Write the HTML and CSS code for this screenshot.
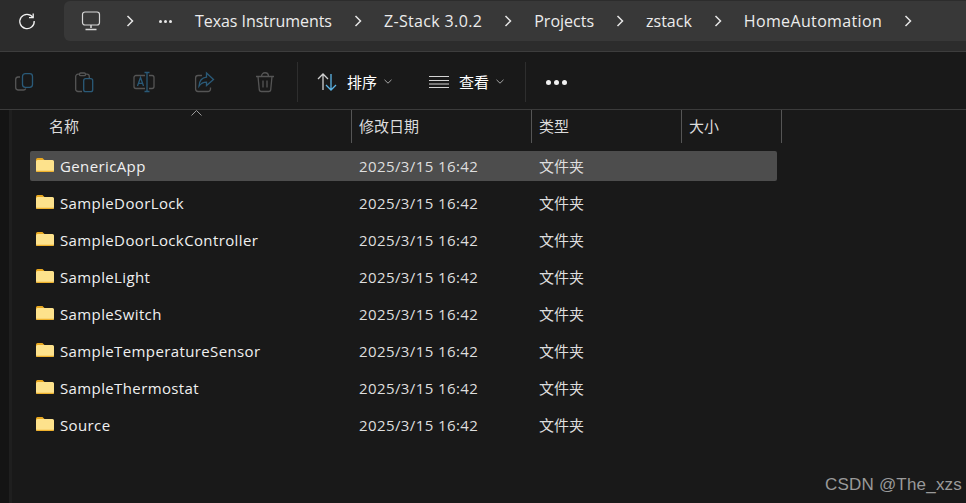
FILE: index.html
```html
<!DOCTYPE html>
<html lang="zh">
<head>
<meta charset="utf-8">
<title>zstack</title>
<link rel="stylesheet" href="styles.css">
</head>
<body>
<svg class="defs" width="0" height="0" aria-hidden="true">
  <symbol id="folder" viewBox="0 0 18 14">
    <path d="M0 1.500A1.500 1.500 0 0 1 1.500 0h5L9 2.500V6H0z" fill="#e9a820"/>
    <path d="M0 3.500A1.500 1.500 0 0 1 1.500 2H16.500A1.500 1.500 0 0 1 18 3.500V12.500A1.500 1.500 0 0 1 16.500 14h-15A1.500 1.500 0 0 1 0 12.500z" fill="#fde28c"/>
    <path d="M0 12.800h18A1.500 1.500 0 0 1 16.500 14h-15A1.500 1.500 0 0 1 0 12.800z" fill="#efb12c"/>
  </symbol>
  <symbol id="chev" viewBox="0 0 10 14">
    <path d="M2.500 2l5 5-5 5" fill="none" stroke="currentColor" stroke-width="1.500"/>
  </symbol>
  <symbol id="down" viewBox="0 0 8 5">
    <path d="M.5.800L4 4.200 7.500.800" fill="none" stroke="currentColor"/>
  </symbol>
</svg>
<div class="addressbar">
  <svg class="refresh" width="20" height="20" viewBox="0 0 20 20" fill="none" stroke="#f2f2f2" stroke-width="1.300"><path d="M15.800 6.200A7.200 7.200 0 1 0 17.200 10"/><path d="M12 6.600h4.200V2.400"/></svg>
  <nav class="crumbs">
    <svg class="pc" width="20" height="20" viewBox="0 0 20 20" fill="none" stroke="#d8d8d8" stroke-width="1.200"><rect x="1.500" y="1" width="17" height="13" rx="2.500"/><path d="M10 14v3M4.500 18.500h11" stroke-width="1.500"/></svg>
    <svg class="chev" width="10" height="14"><use href="#chev"/></svg>
    <span class="more"><i></i><i></i><i></i></span>
    <span class="crumb first">Texas Instruments</span>
    <svg class="chev" width="10" height="14"><use href="#chev"/></svg>
    <span class="crumb wide">Z-Stack 3.0.2</span>
    <svg class="chev" width="10" height="14"><use href="#chev"/></svg>
    <span class="crumb">Projects</span>
    <svg class="chev" width="10" height="14"><use href="#chev"/></svg>
    <span class="crumb">zstack</span>
    <svg class="chev" width="10" height="14"><use href="#chev"/></svg>
    <span class="crumb wide">HomeAutomation</span>
    <svg class="chev" width="10" height="14"><use href="#chev"/></svg>
  </nav>
</div>
<div class="toolbar">
  <div class="tools">
    <svg width="20" height="20" viewBox="0 0 20 20" fill="none" stroke-width="1.300"><path d="M5 5H3A2.500 2.500 0 0 0 .7 7.500v8A2.500 2.500 0 0 0 3 18h5.500a2.500 2.500 0 0 0 2.300-1.500" stroke="#555"/><rect x="7.500" y="1.600" width="10" height="13.800" rx="2.800" stroke="#2a5a78"/></svg>
    <svg width="20" height="20" viewBox="0 0 20 20" fill="none" stroke-width="1.300"><path d="M7 19.500H3a2.300 2.300 0 0 1-2.300-2.300V4.500A2.300 2.300 0 0 1 3 2.200h9a2.300 2.300 0 0 1 2.300 2.300V6" stroke="#555"/><rect x="4.500" y="1" width="6" height="2.600" rx="1.200" fill="#191919" stroke="#555"/><rect x="8.700" y="6.700" width="9" height="13" rx="2" stroke="#2a5a78"/></svg>
    <svg class="nudge" width="20" height="20" viewBox="0 0 20 20" fill="none" stroke-width="1.300"><path d="M11 3.500H2A2 2 0 0 0 0 5.500v9a2 2 0 0 0 2 2h9M15 3.500h3a2 2 0 0 1 2 2v9a2 2 0 0 1-2 2h-3" stroke="#555"/><path d="M13 .500v19M10.500.500h5M10.500 19.500h5M3.500 14l3-8.500L9.500 14M4.500 11.300h4" stroke="#2a5a78"/></svg>
    <svg width="20" height="20" viewBox="0 0 20 20" fill="none" stroke-width="1.300"><path d="M7 3.500H3A2.500 2.500 0 0 0 .6 6v11A2.500 2.500 0 0 0 3 19.500h10a2.500 2.500 0 0 0 2.500-2.500v-1.500" stroke="#555"/><path d="M11.500 1l7 6.500-7 6v-3.300c-3.500 0-5.500 1-7.500 4 .3-5 3-8.500 7.500-9z" stroke="#2a5a78"/></svg>
    <svg width="20" height="20" viewBox="0 0 20 20" fill="none" stroke="#555" stroke-width="1.300"><path d="M1 4.500h18M6.500 4.500c0-5 7-5 7 0M3 4.500l1.300 13.500a2 2 0 0 0 2 1.500h7.400a2 2 0 0 0 2-1.500L17 4.500M8 8.500v7M12 8.500v7"/></svg>
  </div>
  <div class="sep"></div>
  <button class="tbtn sort">
    <svg width="20" height="18" viewBox="0 0 20 18" fill="none" stroke-width="1.300"><path d="M1 6l5-5 5 5M6 1v16" stroke="#cfcfcf"/><path d="M9 12l5 5 5-5M14 17V1" stroke="#5cb4e6"/></svg>
    <span class="tlabel">排序</span>
    <svg class="down" width="8" height="5"><use href="#down"/></svg>
  </button>
  <button class="tbtn view">
    <svg width="20" height="14" viewBox="0 0 20 14" stroke="#d4d4d4" stroke-width="1.200"><path d="M0 1.500h20M0 5.500h20M0 9h20M0 12.500h20"/></svg>
    <span class="tlabel">查看</span>
    <svg class="down" width="8" height="5"><use href="#down"/></svg>
  </button>
  <div class="sep"></div>
  <div class="dots"><i></i><i></i><i></i></div>
</div>
<main class="content">
  <div class="rail"></div>
  <div class="list">
    <div class="head">
      <div class="hc hname">名称<svg class="sortmark" width="11" height="6" viewBox="0 0 11 6" fill="none" stroke="#9a9a9a"><path d="M.5 5.500l5-5 5 5"/></svg></div>
      <div class="hc hdate">修改日期</div>
      <div class="hc htype">类型</div>
      <div class="hc hsize">大小</div>
    </div>
    <div class="row selected"><svg class="fld"><use href="#folder"/></svg><span class="name">GenericApp</span><span class="date">2025/3/15 16:42</span><span class="type">文件夹</span></div>
    <div class="row"><svg class="fld"><use href="#folder"/></svg><span class="name">SampleDoorLock</span><span class="date">2025/3/15 16:42</span><span class="type">文件夹</span></div>
    <div class="row"><svg class="fld"><use href="#folder"/></svg><span class="name">SampleDoorLockController</span><span class="date">2025/3/15 16:42</span><span class="type">文件夹</span></div>
    <div class="row"><svg class="fld"><use href="#folder"/></svg><span class="name">SampleLight</span><span class="date">2025/3/15 16:42</span><span class="type">文件夹</span></div>
    <div class="row"><svg class="fld"><use href="#folder"/></svg><span class="name">SampleSwitch</span><span class="date">2025/3/15 16:42</span><span class="type">文件夹</span></div>
    <div class="row"><svg class="fld"><use href="#folder"/></svg><span class="name">SampleTemperatureSensor</span><span class="date">2025/3/15 16:42</span><span class="type">文件夹</span></div>
    <div class="row"><svg class="fld"><use href="#folder"/></svg><span class="name">SampleThermostat</span><span class="date">2025/3/15 16:42</span><span class="type">文件夹</span></div>
    <div class="row"><svg class="fld"><use href="#folder"/></svg><span class="name">Source</span><span class="date">2025/3/15 16:42</span><span class="type">文件夹</span></div>
  </div>
  <div class="watermark">CSDN @The_xzs</div>
</main>
</body>
</html>
```
FILE: styles.css
```css
* { box-sizing: border-box; }
html, body { margin: 0; height: 100%; overflow: hidden; }
body {
  background: #191919;
  color: #fff;
  font-family: "Open Sans", "Noto Sans CJK SC", sans-serif;
  display: flex;
  flex-direction: column;
  width: 966px;
  height: 503px;
}
.defs { position: absolute; }
.addressbar {
  height: 52px;
  flex: none;
  background: #2c2c2c;
  border-bottom: 1px solid #3d3d3d;
  padding: 1px 0 10px 17px;
  display: flex;
  align-items: center;
  gap: 27px;
}
.refresh { flex: none; }
.crumbs {
  flex: 1;
  height: 40px;
  background: #383838;
  border-radius: 6px 0 0 6px;
  display: flex;
  align-items: center;
  padding-left: 17px;
  color: #ececec;
}
.pc { flex: none; margin-right: 24px; }
.chev { flex: none; color: #e6e6e6; }
.more { display: flex; gap: 2px; width: 36px; margin-left: 24px; }
.more i { width: 3px; height: 3px; border-radius: 50%; background: #e8e8e8; }
.crumb { font-size: 16px; letter-spacing: 0; white-space: nowrap; margin: 0 21px; }
.first { margin-left: 0; letter-spacing: -0.05px; }
.wide { letter-spacing: 0.35px; }
.toolbar {
  height: 58px;
  flex: none;
  border-bottom: 1px solid #3b3b3b;
  display: flex;
  align-items: center;
  padding: 3px 0 0 15px;
}
.tools { display: flex; align-items: center; gap: 40px; width: 282px; }
.tools svg { flex: none; overflow: visible; }
.nudge { margin-left: -1px; margin-right: 1px; }
.sep { width: 1px; height: 40px; background: #2e2e2e; flex: none; }
.tbtn {
  background: none;
  border: 0;
  padding: 0;
  color: #fff;
  font: inherit;
  display: flex;
  align-items: center;
  flex: none;
}
.sort { margin-left: 19px; width: 112px; }
.view { width: 96px; }
.tlabel { font-size: 15px; margin: -2px 0 0 10px; font-family: "Noto Sans CJK SC", sans-serif; }
.down { color: #a5a5a5; margin: -2px 0 0 7px; }
.dots { display: flex; gap: 3px; margin-left: 20px; }
.dots i { width: 5px; height: 5px; border-radius: 50%; background: #f0f0f0; }
.content { flex: 1; display: flex; position: relative; }
.rail { width: 12px; flex: none; background: #141414; border-right: 3px solid #1f1f1f; }
.list { flex: none; width: 770px; }
.head { height: 36px; display: flex; position: relative; font-family: "Noto Sans CJK SC", sans-serif; font-size: 15px; color: #dcdcdc; }
.hc { height: 33px; display: flex; align-items: center; padding-left: 7px; border-right: 1px solid #555; position: relative; padding-bottom: 3px; }
.hname { width: 340px; padding-left: 37px; }
.hdate { width: 180px; }
.htype { width: 150px; }
.hsize { width: 100px; }
.sortmark { position: absolute; left: 179px; top: 0; }
.row {
  height: 30px;
  margin: 5px 0 7px 18px;
  width: 747px;
  display: flex;
  align-items: center;
  border-radius: 2px;
  font-size: 15px;
  letter-spacing: 0.38px;
  color: #f0f0f0;
}
.selected { background: #4d4d4d; }
.fld { width: 18px; height: 14px; margin: -2px 6px 0 6px; flex: none; }
.name { width: 299px; flex: none; }
.date { width: 180px; flex: none; letter-spacing: 0.4px; color: #dedede; }
.type { font-family: "Noto Sans CJK SC", sans-serif; letter-spacing: 0; color: #dedede; margin-top: -2px; }
.watermark {
  position: absolute;
  right: 4px;
  bottom: 8px;
  font-family: "Liberation Sans", sans-serif;
  font-size: 17px;
  color: #9a9a9a;
  letter-spacing: 0.2px;
}
```
